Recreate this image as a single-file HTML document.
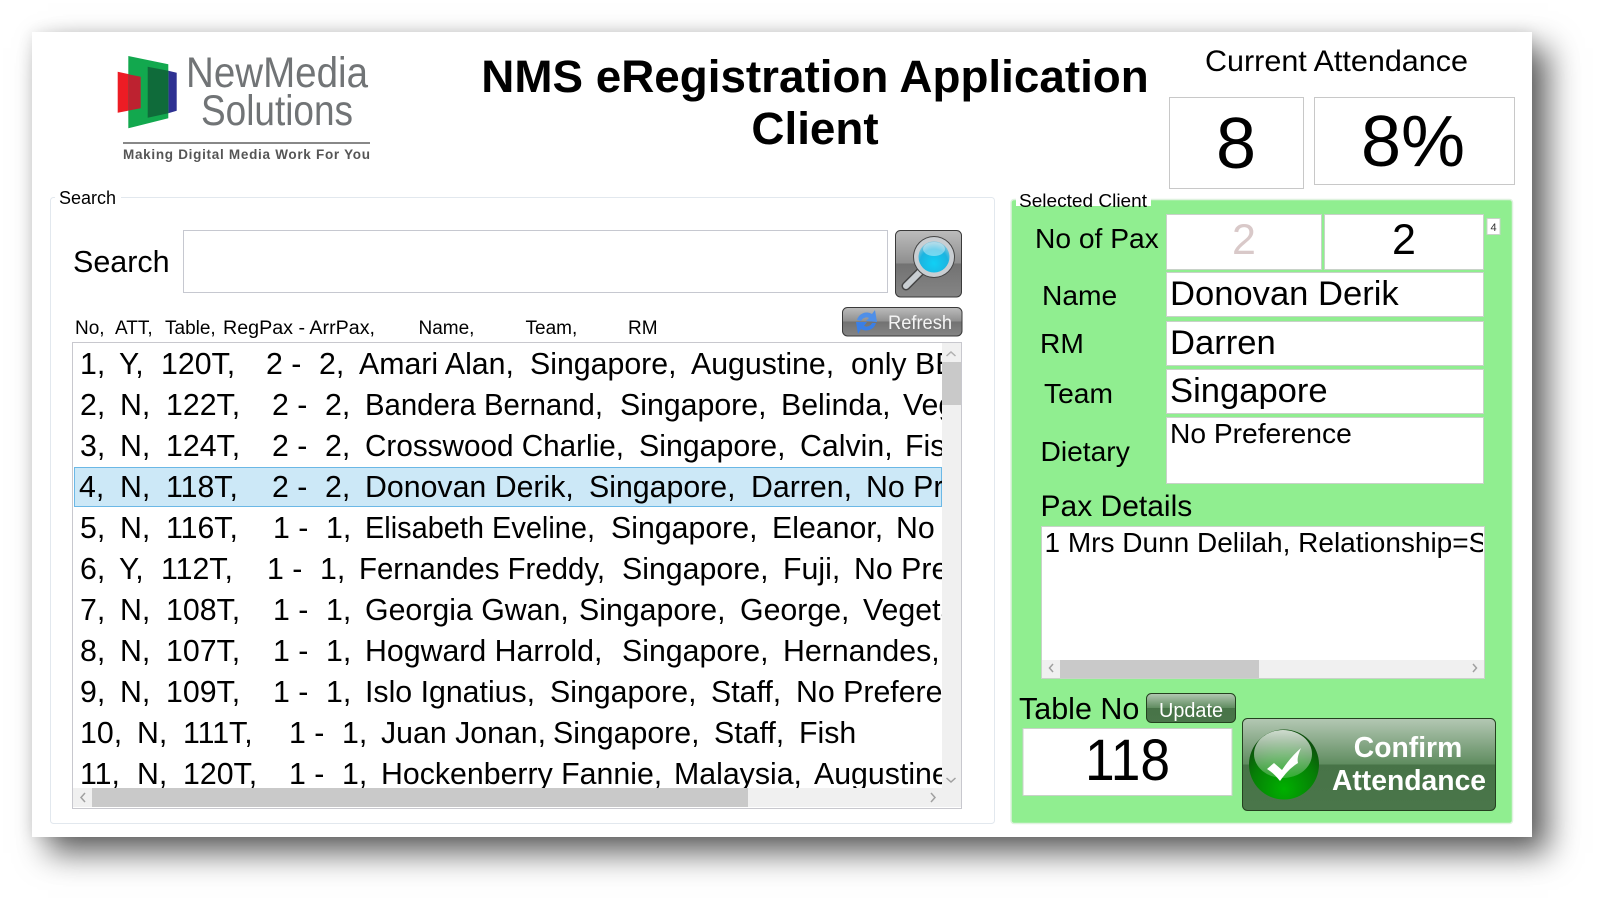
<!DOCTYPE html>
<html><head><meta charset="utf-8"><title>NMS eRegistration Application Client</title>
<style>
html,body{margin:0;padding:0;background:#fff;width:1597px;height:902px;overflow:hidden;font-family:"Liberation Sans",sans-serif}
svg{position:absolute;left:0;top:0}
text{font-family:"Liberation Sans",sans-serif;fill:#000;white-space:pre}
#sheet{position:absolute;left:32px;top:32px;width:1500px;height:805px;background:#fff;box-shadow:16px 16px 30px rgba(0,0,0,.62),0 0 14px rgba(0,0,0,.1)}
</style></head><body>
<div id="sheet"></div>
<svg width="1597" height="902" viewBox="0 0 1597 902" xmlns="http://www.w3.org/2000/svg">
<defs>
<linearGradient id="gSearch" x1="0" y1="0" x2="0" y2="1"><stop offset="0" stop-color="#bcbcbc"/><stop offset=".5" stop-color="#8e8e8e"/><stop offset=".5" stop-color="#727272"/><stop offset="1" stop-color="#858585"/></linearGradient>
<linearGradient id="gGreen" x1="0" y1="0" x2="0" y2="1"><stop offset="0" stop-color="#b4c8b4"/><stop offset=".5" stop-color="#5f8c5f"/><stop offset=".5" stop-color="#477347"/><stop offset="1" stop-color="#4a764a"/></linearGradient>
<radialGradient id="gBall" cx=".5" cy=".85" r=".75"><stop offset="0" stop-color="#00b000"/><stop offset=".65" stop-color="#067d06"/><stop offset="1" stop-color="#0d4f0d"/></radialGradient>
<linearGradient id="gGloss" x1="0" y1="0" x2="0" y2="1"><stop offset="0" stop-color="#fff" stop-opacity=".8"/><stop offset="1" stop-color="#fff" stop-opacity=".18"/></linearGradient>
<radialGradient id="gLens" cx=".5" cy=".7" r=".65"><stop offset="0" stop-color="#10d0f5"/><stop offset=".7" stop-color="#1cb4e0"/><stop offset="1" stop-color="#7cc4dc"/></radialGradient>
<clipPath id="cList"><rect x="73" y="343" width="869" height="445"/></clipPath>
<clipPath id="cPax"><rect x="1042" y="527" width="441" height="133"/></clipPath>
</defs>

<!-- Logo -->
<polygon points="117.7,71.7 140.7,76.7 140.7,108.3 117.7,112.7" fill="#ed1c24"/>
<polygon points="168.3,70.7 176.7,72.7 176.7,110.7 168.3,113.3" fill="#2e3192"/>
<polygon points="128.3,56 168.3,64.3 168.3,118.3 128.3,128.3" fill="#12a84e"/>
<polygon points="128.3,74.2 140.7,76.7 140.7,108.3 128.3,110.6" fill="#bd2230"/>
<polygon points="147.7,66.7 168.3,70.7 168.3,113.3 147.7,117.7" fill="#0f6b3a"/>
<text x="186" y="87" font-size="43" style="fill:#717476" textLength="182" lengthAdjust="spacingAndGlyphs">NewMedia</text>
<text x="201" y="125" font-size="43" style="fill:#717476" textLength="152" lengthAdjust="spacingAndGlyphs">Solutions</text>
<rect x="123" y="142" width="247" height="2" fill="#888"/>
<text x="123" y="159" font-size="13.5" font-weight="bold" style="fill:#555" textLength="247" lengthAdjust="spacing">Making Digital Media Work For You</text>

<!-- Title -->
<text x="815" y="92" font-size="45.8" font-weight="bold" text-anchor="middle">NMS eRegistration Application</text>
<text x="815" y="144" font-size="45.8" font-weight="bold" text-anchor="middle">Client</text>
<text x="1205" y="71" font-size="30" textLength="263" lengthAdjust="spacingAndGlyphs">Current Attendance</text>
<rect x="1169.5" y="97.5" width="134" height="91" fill="#fff" stroke="#c8c8c8"/>
<rect x="1314.5" y="97.5" width="200" height="87" fill="#fff" stroke="#c8c8c8"/>
<text x="1236" y="168" font-size="72" text-anchor="middle">8</text>
<text x="1413" y="166" font-size="72" text-anchor="middle">8%</text>

<!-- Search group -->
<rect x="50.5" y="197.5" width="944" height="626" rx="3" fill="#fff" stroke="#e2e8ee"/>
<rect x="55" y="190" width="66" height="14" fill="#fff"/>
<text x="59" y="204" font-size="18">Search</text>
<text x="73" y="272" font-size="30.5">Search</text>
<rect x="183.5" y="230.5" width="704" height="62" fill="#fff" stroke="#c6c8d0"/>
<rect x="895.5" y="230.5" width="66" height="66.5" rx="5" fill="url(#gSearch)" stroke="#3a3a3a"/>
<line x1="906" y1="286" x2="921" y2="271" stroke="#444" stroke-width="9" stroke-linecap="round"/>
<line x1="906" y1="286" x2="921" y2="271" stroke="#c9ced2" stroke-width="6" stroke-linecap="round"/>
<circle cx="934" cy="257" r="21" fill="#444"/>
<circle cx="934" cy="257" r="20" fill="#c9ced2"/>
<circle cx="934" cy="257" r="15.5" fill="url(#gLens)"/>
<ellipse cx="934" cy="249" rx="11" ry="7" fill="#fff" fill-opacity=".4"/>
<rect x="842.5" y="307.5" width="119.5" height="28.5" rx="5" fill="url(#gSearch)" stroke="#3a3a3a"/>
<path d="M857 320a10 10 0 0 1 15-6l3-4 2 12-11-1 3-3a6 6 0 0 0-8 3z" fill="#4f8fe8"/>
<path d="M876 323a10 10 0 0 1-15 6l-3 5-2-12 11 0-3 4a6 6 0 0 0 8-3z" fill="#3a7fe6"/>
<text x="888" y="329" font-size="19" style="fill:#f4f4f4" textLength="64" lengthAdjust="spacingAndGlyphs">Refresh</text>

<g font-size="19">
<text x="75" y="334">No,</text><text x="115" y="334">ATT,</text><text x="165" y="334">Table,</text>
<text x="223" y="334" textLength="152" lengthAdjust="spacingAndGlyphs">RegPax - ArrPax,</text>
<text x="418.5" y="334">Name,</text><text x="525.5" y="334">Team,</text><text x="628" y="334">RM</text>
</g>

<!-- List -->
<rect x="72.5" y="342.5" width="889" height="466" fill="#fff" stroke="#c8c8ce"/>
<rect x="74.5" y="467.5" width="867" height="39" fill="#cce8f7" stroke="#6bb8e6"/>
<g clip-path="url(#cList)" font-size="30.3">
<g transform="translate(0,374)"><text x="80">1,</text><text x="119">Y,</text><text x="161">120T,</text><text x="266">2 -</text><text x="319">2,</text><text x="359">Amari Alan,</text><text x="530">Singapore,</text><text x="691">Augustine,</text><text x="851">only BBQ</text></g>
<g transform="translate(0,415)"><text x="80">2,</text><text x="120">N,</text><text x="166">122T,</text><text x="272">2 -</text><text x="325">2,</text><text x="365" textLength="238" lengthAdjust="spacingAndGlyphs">Bandera Bernand,</text><text x="620">Singapore,</text><text x="781">Belinda,</text><text x="903">Vegetarian</text></g>
<g transform="translate(0,456)"><text x="80">3,</text><text x="120">N,</text><text x="166">124T,</text><text x="272">2 -</text><text x="325">2,</text><text x="365" textLength="259" lengthAdjust="spacingAndGlyphs">Crosswood Charlie,</text><text x="639">Singapore,</text><text x="800">Calvin,</text><text x="905">Fish</text></g>
<g transform="translate(0,497)"><text x="79">4,</text><text x="120">N,</text><text x="166">118T,</text><text x="272">2 -</text><text x="325">2,</text><text x="365">Donovan Derik,</text><text x="589">Singapore,</text><text x="751">Darren,</text><text x="866">No Preference</text></g>
<g transform="translate(0,538)"><text x="80">5,</text><text x="120">N,</text><text x="166">116T,</text><text x="273">1 -</text><text x="326">1,</text><text x="365" textLength="230" lengthAdjust="spacingAndGlyphs">Elisabeth Eveline,</text><text x="611">Singapore,</text><text x="772">Eleanor,</text><text x="896">No</text></g>
<g transform="translate(0,579)"><text x="80">6,</text><text x="119">Y,</text><text x="161">112T,</text><text x="267">1 -</text><text x="320">1,</text><text x="359" textLength="246" lengthAdjust="spacingAndGlyphs">Fernandes Freddy,</text><text x="622">Singapore,</text><text x="783">Fuji,</text><text x="854">No Preference</text></g>
<g transform="translate(0,620)"><text x="80">7,</text><text x="120">N,</text><text x="166">108T,</text><text x="273">1 -</text><text x="326">1,</text><text x="365">Georgia Gwan,</text><text x="579">Singapore,</text><text x="740">George,</text><text x="863">Vegetarian</text></g>
<g transform="translate(0,661)"><text x="80">8,</text><text x="120">N,</text><text x="166">107T,</text><text x="273">1 -</text><text x="326">1,</text><text x="365">Hogward Harrold,</text><text x="622">Singapore,</text><text x="783">Hernandes,</text></g>
<g transform="translate(0,702)"><text x="80">9,</text><text x="120">N,</text><text x="166">109T,</text><text x="273">1 -</text><text x="326">1,</text><text x="365">Islo Ignatius,</text><text x="550">Singapore,</text><text x="711">Staff,</text><text x="796">No Preference</text></g>
<g transform="translate(0,743)"><text x="80">10,</text><text x="137">N,</text><text x="183">111T,</text><text x="289">1 -</text><text x="342">1,</text><text x="381">Juan Jonan,</text><text x="553">Singapore,</text><text x="714">Staff,</text><text x="799">Fish</text></g>
<g transform="translate(0,784)"><text x="80">11,</text><text x="137">N,</text><text x="183">120T,</text><text x="289">1 -</text><text x="342">1,</text><text x="381">Hockenberry Fannie,</text><text x="674">Malaysia,</text><text x="814">Augustine</text></g>
</g>
<!-- scrollbars -->
<rect x="942" y="343" width="19" height="445" fill="#f0f0f0"/>
<rect x="942" y="362" width="19" height="43" fill="#c9c9c9"/>
<path d="M946.5 356l4.5-4 4.5 4" fill="none" stroke="#b0b0b0" stroke-width="1.5"/>
<path d="M946.5 778l4.5 4 4.5-4" fill="none" stroke="#a0a0a0" stroke-width="1.5"/>
<rect x="73" y="788" width="888" height="19" fill="#f0f0f0"/>
<rect x="92" y="788" width="656" height="19" fill="#c9c9c9"/>
<path d="M85 793l-4 4.5 4 4.5" fill="none" stroke="#a0a0a0" stroke-width="1.5"/>
<path d="M931 793l4 4.5-4 4.5" fill="none" stroke="#a0a0a0" stroke-width="1.5"/>

<!-- Selected Client -->
<rect x="1011" y="199.5" width="501.5" height="624" rx="3" fill="#90ee90" stroke="#dff2df" stroke-width="1.5"/>
<rect x="1016" y="192" width="135" height="14" fill="#fff"/>
<text x="1019" y="207" font-size="18.5" textLength="128" lengthAdjust="spacingAndGlyphs">Selected Client</text>
<text x="1035" y="248" font-size="28.2">No of Pax</text>
<g fill="#fff" stroke="#c8d2c8">
<rect x="1166.5" y="214.5" width="155" height="55"/>
<rect x="1324.5" y="214.5" width="159" height="55"/>
<rect x="1166.5" y="272.5" width="317" height="44"/>
<rect x="1166.5" y="321.5" width="317" height="44"/>
<rect x="1166.5" y="369.5" width="317" height="44"/>
<rect x="1166.5" y="417.5" width="317" height="66"/>
<rect x="1487" y="218.5" width="13" height="16"/>
<rect x="1041.5" y="526.5" width="443" height="152"/>
<rect x="1023" y="728.5" width="209" height="67"/>
</g>
<text x="1244" y="254" font-size="43" text-anchor="middle" style="fill:#d9c9c9">2</text>
<text x="1404" y="254" font-size="43" text-anchor="middle">2</text>
<text x="1493.5" y="231" font-size="11" text-anchor="middle" style="fill:#333">4</text>
<text x="1042" y="305" font-size="28.2">Name</text>
<text x="1040" y="353" font-size="28.2">RM</text>
<text x="1044" y="403" font-size="28.2">Team</text>
<text x="1040.5" y="461" font-size="28.2">Dietary</text>
<text x="1170" y="305" font-size="34.6">Donovan Derik</text>
<text x="1170" y="354" font-size="34.6">Darren</text>
<text x="1170" y="402" font-size="34.6">Singapore</text>
<text x="1170" y="443" font-size="28.2">No Preference</text>
<text x="1040.5" y="516" font-size="30">Pax Details</text>
<g clip-path="url(#cPax)"><text x="1044.5" y="552" font-size="28">1 Mrs Dunn Delilah, Relationship=Spouse</text></g>
<rect x="1042" y="660" width="442" height="18" fill="#f0f0f0"/>
<rect x="1060" y="660" width="199" height="18" fill="#c9c9c9"/>
<path d="M1053 664l-3.5 4 3.5 4" fill="none" stroke="#a0a0a0" stroke-width="1.5"/>
<path d="M1473 664l3.5 4-3.5 4" fill="none" stroke="#a0a0a0" stroke-width="1.5"/>

<text x="1019" y="719" font-size="30.5">Table No</text>
<rect x="1146.5" y="693.5" width="89" height="29" rx="5" fill="url(#gGreen)" stroke="#24401f"/>
<text x="1159" y="717" font-size="20" style="fill:#fff" textLength="64" lengthAdjust="spacingAndGlyphs">Update</text>
<text x="1085" y="780" font-size="58" textLength="85" lengthAdjust="spacingAndGlyphs">118</text>

<rect x="1242.5" y="718.5" width="253" height="92" rx="5" fill="url(#gGreen)" stroke="#24401f"/>
<circle cx="1284" cy="764.5" r="35" fill="url(#gBall)"/>
<ellipse cx="1283" cy="754" rx="29" ry="24" fill="url(#gGloss)"/>
<path d="M1267 769L1274 763L1282 770C1288 761 1294 754 1301 748C1298 755 1297 759 1298 763C1290 768 1285 774 1280 781C1276 776 1272 772 1267 769Z" fill="#fff"/>
<text x="1408" y="757" font-size="28.3" font-weight="bold" text-anchor="middle" style="fill:#fff">Confirm</text>
<text x="1409" y="790" font-size="28.3" font-weight="bold" text-anchor="middle" style="fill:#fff">Attendance</text>
</svg>
</body></html>
